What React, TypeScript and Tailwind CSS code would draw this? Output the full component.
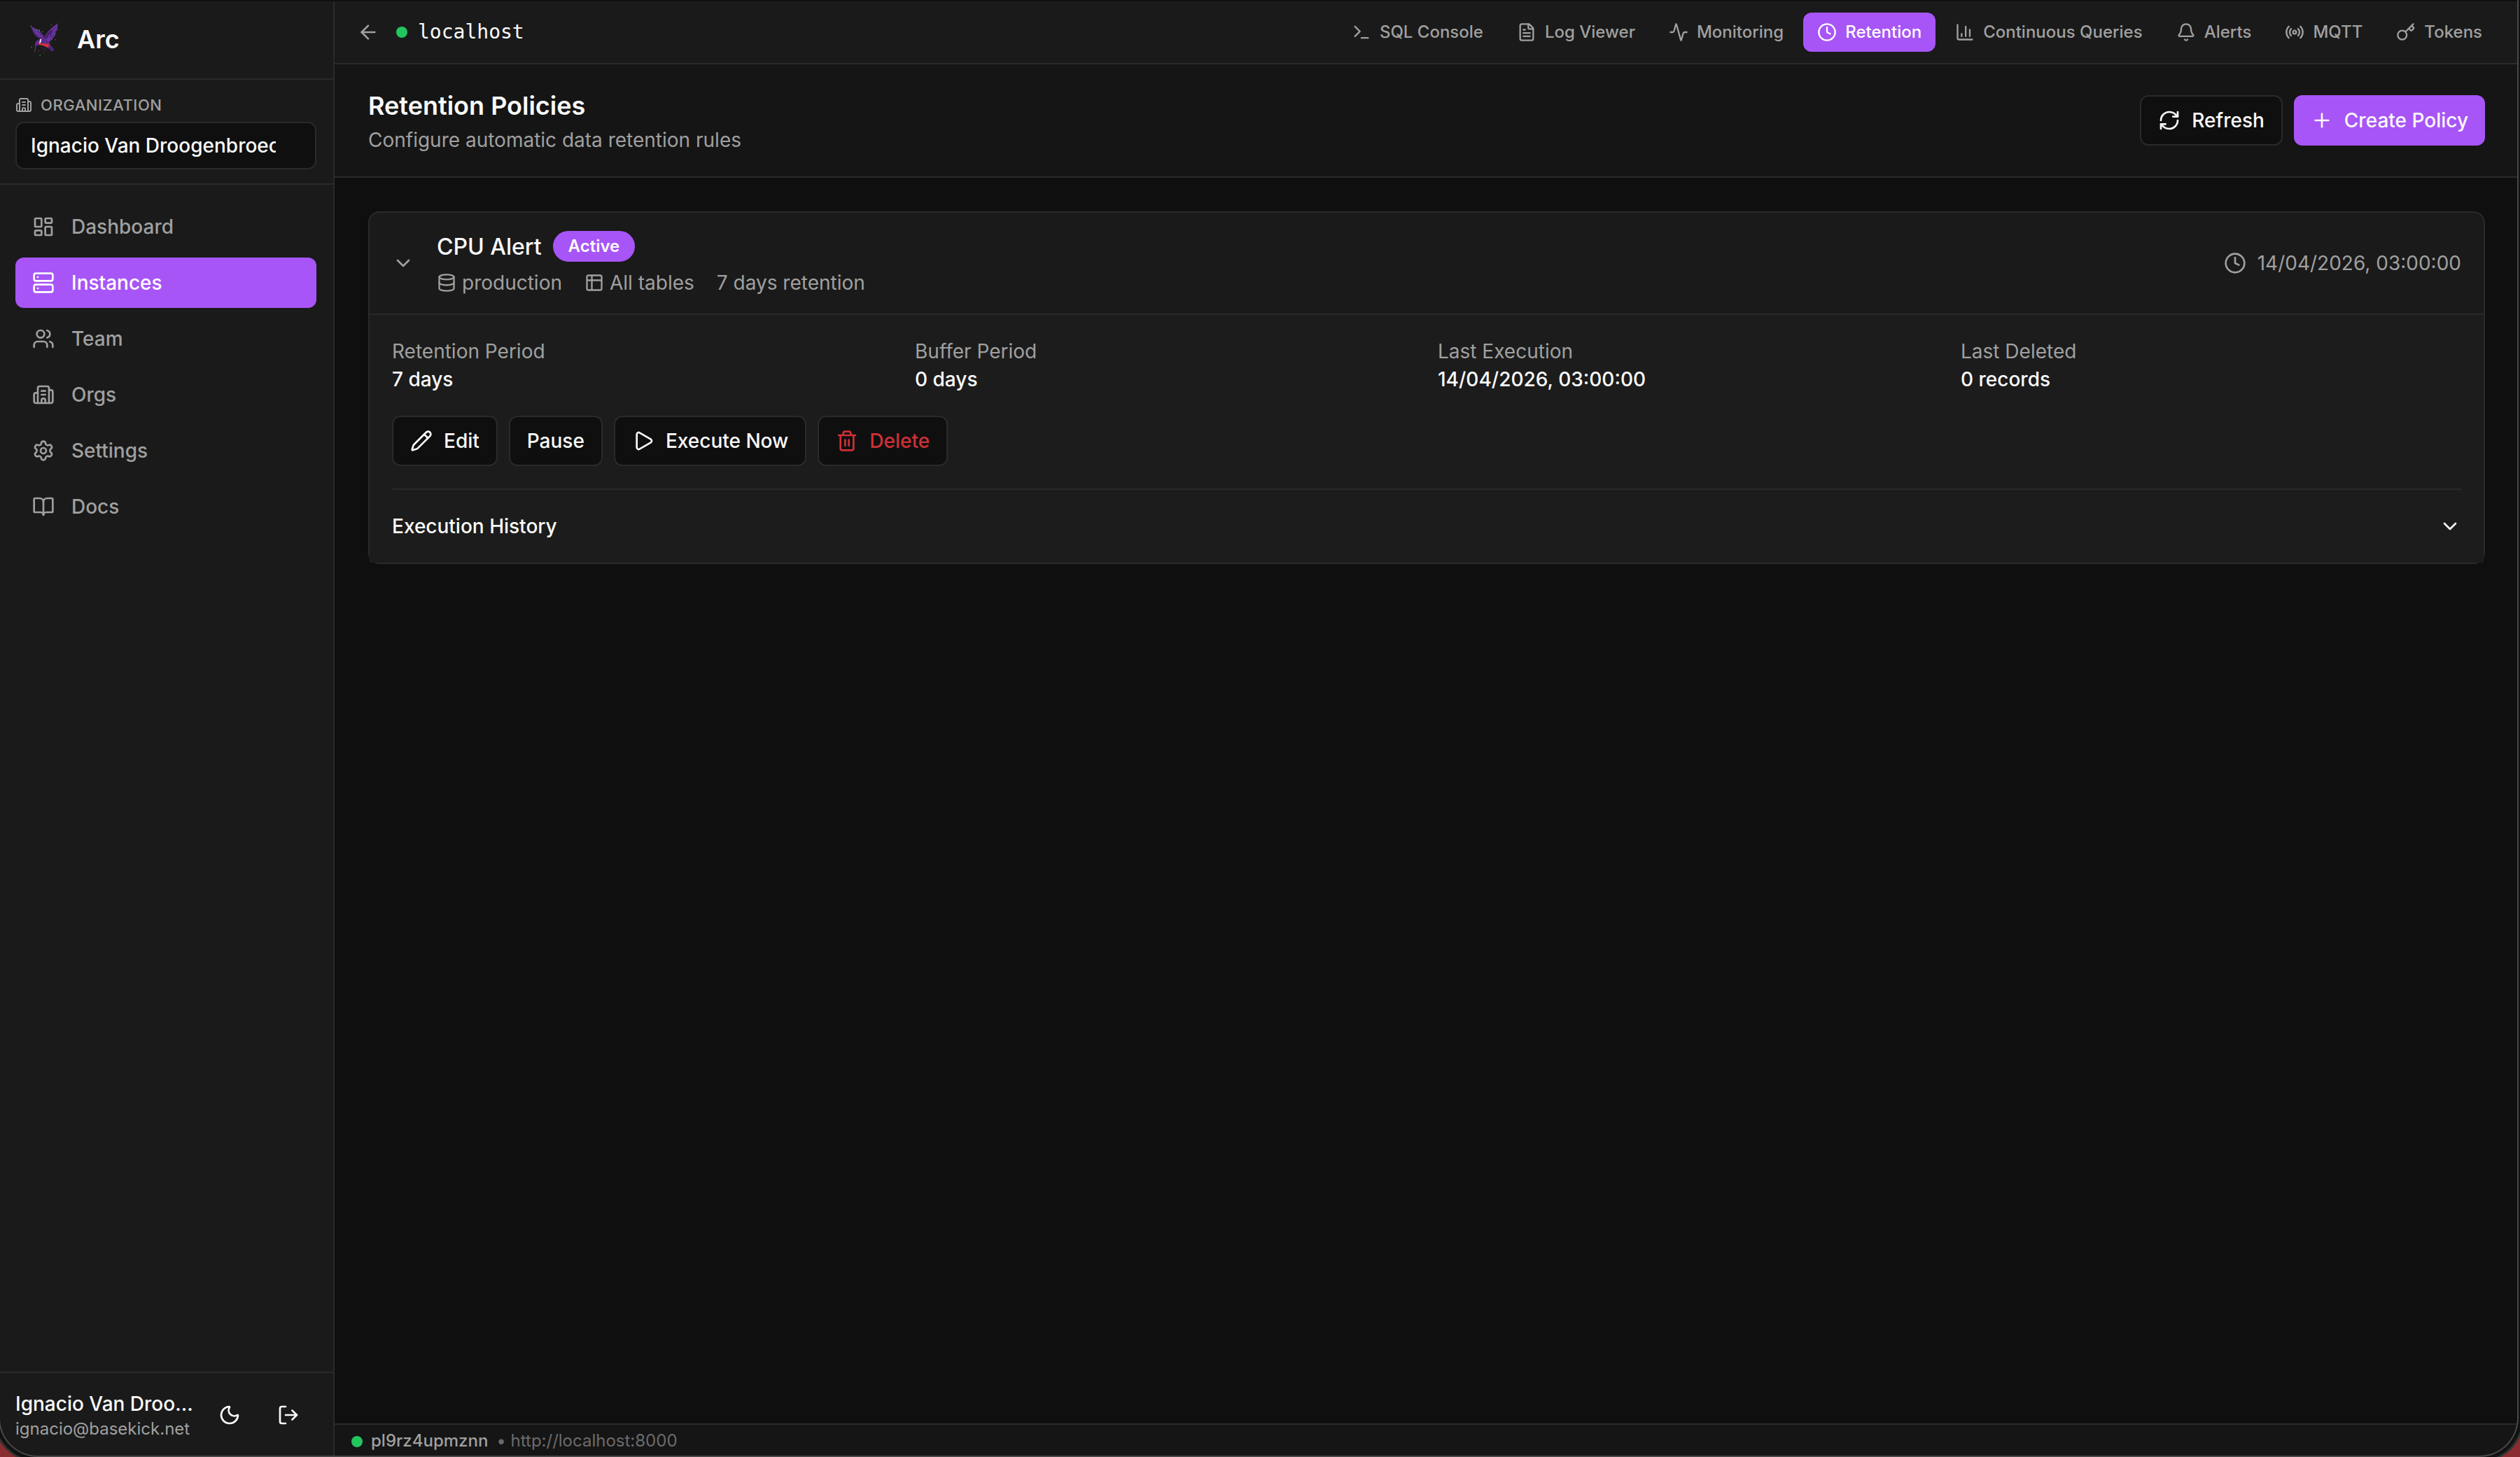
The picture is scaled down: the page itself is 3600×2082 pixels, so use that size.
import React from 'react';
import clsx from 'clsx';
import {
  Activity,
  ArrowLeft,
  Bell,
  BookOpen,
  Building2,
  ChartColumn,
  ChevronDown,
  Clock,
  Database,
  FileText,
  Key,
  LayoutDashboard,
  LogOut,
  Moon,
  Pencil,
  Play,
  Plus,
  Radio,
  RefreshCw,
  Server,
  Settings,
  Table2,
  Terminal,
  Trash2,
  Users,
  type LucideIcon,
} from 'lucide-react';

interface NavItem {
  label: string;
  icon: LucideIcon;
  active?: boolean;
}

const sidebarItems: NavItem[] = [
  { label: 'Dashboard', icon: LayoutDashboard },
  { label: 'Instances', icon: Server, active: true },
  { label: 'Team', icon: Users },
  { label: 'Orgs', icon: Building2 },
  { label: 'Settings', icon: Settings },
  { label: 'Docs', icon: BookOpen },
];

const instanceTabs: NavItem[] = [
  { label: 'SQL Console', icon: Terminal },
  { label: 'Log Viewer', icon: FileText },
  { label: 'Monitoring', icon: Activity },
  { label: 'Retention', icon: Clock, active: true },
  { label: 'Continuous Queries', icon: ChartColumn },
  { label: 'Alerts', icon: Bell },
  { label: 'MQTT', icon: Radio },
  { label: 'Tokens', icon: Key },
];

const policyStats = [
  { label: 'Retention Period', value: '7 days' },
  { label: 'Buffer Period', value: '0 days' },
  { label: 'Last Execution', value: '14/04/2026, 03:00:00' },
  { label: 'Last Deleted', value: '0 records' },
];

function Logo() {
  return (
    <svg viewBox="24 39 144 144" className="mt-0.5 h-12 w-12">
      {/* wings */}
      <path d="M41 51 L62 63 L77 68 L86 80 L98 94 L101 106 L92 108 L76 103 L60 91 L51 76 Z" fill="#5b2b8c" />
      <path d="M52 62 L70 76 L90 97 L82 98 L62 82 Z" fill="#6a35a3" />
      <path d="M158 40 L155 62 L149 80 L145 94 L134 107 L122 119 L105 117 L98 108 L106 88 L119 72 L136 56 Z" fill="#6a35a3" />
      <path d="M132 66 L110 84 L101 107 L112 106 L120 90 L134 80 Z" fill="#482070" />
      <path d="M148 56 L131 79 L124 101 M152 70 L132 101" fill="none" stroke="#3d1c60" strokeWidth="3" />
      {/* body, beak and tail */}
      <path d="M100 106 L78 108 L64 117 L59 130 L60 144 L66 136 L80 132 L104 140 L122 150 L132 161 L142 153 L126 134 L120 118 Z" fill="#5b2b8c" />
      <path d="M110 138 L124 141 L142 153 L133 160 L121 149 Z" fill="#4b2476" />
      <path d="M61 138 L65 140 L59 168 L57 160 Z" fill="#44424a" />
      <path d="M72 122 L92 127 L120 128 L118 143 L108 142 L96 135 L78 133 Z" fill="#d62f35" />
      <path d="M82 108 L88 106 L85 122 L78 126 Z" fill="#f4f2f6" />
      <path d="M92 146 L101 158 M102 145 L107 157" stroke="#43215f" strokeWidth="3" />
      {/* sparks */}
      <g fill="#2fa865">
        <path d="M40 50h5v3h-5z M55 61h3v4h-3z M66 65h3v7h-3z M78 67h3v7h-3z M89 75h3v3h-3z M128 46h4v3h-4z M142 84h4v3h-4z M43 140h4v4h-4z M80 174h4v4h-4z M155 65h3v4h-3z" />
      </g>
      <g fill="#a52c33">
        <path d="M93 75h3v3h-3z M145 108h5v4h-5z M130 108h3v3h-3z M74 156h4v4h-4z M95 165h4v3h-4z M85 143h3v3h-3z M127 122h3v3h-3z" />
      </g>
    </svg>
  );
}

function Sidebar() {
  return (
    <aside className="flex w-[480px] shrink-0 flex-col border-r-2 border-[#2a2a2a] bg-[#1a1a1a]">
      <div className="flex h-28 items-center gap-6 border-b-2 border-[#2a2a2a] px-10 pb-0.5">
        <Logo />
        <span className="text-[36px] leading-[56px] font-semibold">Arc</span>
      </div>

      <div className="border-b-2 border-[#2a2a2a] px-6 py-5">
        <div className="mb-2 flex items-center gap-3 text-[22px] leading-8 font-medium tracking-wide text-[#a0a0a0] uppercase">
          <Building2 className="h-6 w-6" />
          Organization
        </div>
        <div className="flex h-[68px] items-center rounded-xl border-2 border-[#2a2a2a] bg-[#0f0f0f] pr-14 pl-5">
          <span className="overflow-hidden text-[28px] leading-10 font-medium whitespace-nowrap">
            Ignacio Van Droogenbroeck
          </span>
        </div>
      </div>

      <nav className="flex flex-1 flex-col gap-2 p-6">
        {sidebarItems.map(({ label, icon: Icon, active }) => (
          <a
            key={label}
            className={clsx(
              'flex h-[72px] items-center gap-6 rounded-xl px-6 text-[28px] leading-10 font-medium',
              active ? 'bg-[#a855f7] text-white' : 'text-[#a0a0a0]'
            )}
          >
            <Icon className="h-8 w-8" />
            {label}
          </a>
        ))}
      </nav>

      <div className="flex items-center justify-between border-t-2 border-[#2a2a2a] p-6">
        <div className="w-[254px]">
          <p className="truncate text-[28px] leading-10 font-medium">Ignacio Van Droogenbroeck</p>
          <p className="truncate text-[24px] leading-8 text-[#a0a0a0]">ignacio@basekick.net</p>
        </div>
        <div className="flex gap-1">
          <button className="flex h-16 w-20 items-center justify-center">
            <Moon className="h-8 w-8" />
          </button>
          <button className="flex h-16 w-20 items-center justify-center">
            <LogOut className="h-8 w-8" />
          </button>
        </div>
      </div>
    </aside>
  );
}

function TopBar() {
  return (
    <header className="flex h-[90px] items-center justify-between border-b-2 border-[#2a2a2a] bg-[#1a1a1a] px-8">
      <div className="flex items-center">
        <ArrowLeft className="mr-6 h-8 w-8 text-[#a0a0a0]" />
        <span className="mr-[15px] h-4 w-4 rounded-full bg-[#22c55e]" />
        <span className="font-['DejaVu_Sans_Mono',monospace] text-[28px] leading-10">localhost</span>
      </div>
      <nav className="flex gap-2">
        {instanceTabs.map(({ label, icon: Icon, active }) => (
          <a
            key={label}
            className={clsx(
              'flex items-center gap-3 rounded-xl px-5 py-3 text-[24px] leading-8 font-medium whitespace-nowrap',
              active ? 'bg-[#a855f7] text-white' : 'text-[#a0a0a0]'
            )}
          >
            <Icon className="h-7 w-7" />
            {label}
          </a>
        ))}
      </nav>
    </header>
  );
}

interface OutlineButtonProps {
  label: string;
  icon?: LucideIcon;
  danger?: boolean;
}

function OutlineButton({ label, icon: Icon, danger }: OutlineButtonProps) {
  return (
    <button
      className={clsx(
        'flex h-[72px] items-center gap-4 rounded-xl border-2 border-[#2a2a2a] bg-[#0f0f0f] px-6 text-[28px] leading-10 font-medium',
        danger && 'text-[#cf3035]'
      )}
    >
      {Icon && <Icon className="h-8 w-8" />}
      {label}
    </button>
  );
}

function PageHeader() {
  return (
    <div className="flex items-center justify-between border-b-2 border-[#2a2a2a] bg-[#151515] px-12 py-8">
      <div>
        <h1 className="mb-0.5 text-[36px] leading-[54px] font-semibold">Retention Policies</h1>
        <p className="text-[28px] leading-10 text-[#a0a0a0]">Configure automatic data retention rules</p>
      </div>
      <div className="flex gap-4">
        <OutlineButton label="Refresh" icon={RefreshCw} />
        <button className="flex h-[72px] items-center gap-4 rounded-xl bg-[#a855f7] px-6 text-[28px] leading-10 font-medium">
          <Plus className="h-8 w-8" />
          Create Policy
        </button>
      </div>
    </div>
  );
}

function PolicyCard() {
  return (
    <div className="rounded-2xl border-2 border-[#2a2a2a] bg-[#1a1a1a]">
      {/* Summary row */}
      <div className="flex items-center justify-between px-8 py-6">
        <div className="flex items-center gap-8">
          <ChevronDown className="h-8 w-8 text-[#a0a0a0]" />
          <div>
            <div className="flex items-center gap-4">
              <h3 className="pt-0.5 text-[32px] leading-[46px] font-medium">CPU Alert</h3>
              <span className="rounded-full border-2 border-[#a855f7] bg-[#a855f7] px-5 py-1 text-[24px] leading-8 font-semibold">
                Active
              </span>
            </div>
            <div className="mt-2 flex items-center gap-8 text-[28px] leading-10 text-[#a0a0a0]">
              <span className="flex items-center gap-2">
                <Database className="h-7 w-7" />
                production
              </span>
              <span className="flex items-center gap-2">
                <Table2 className="h-7 w-7" />
                All tables
              </span>
              <span>7 days retention</span>
            </div>
          </div>
        </div>
        <div className="flex items-center gap-4 text-[28px] leading-10 text-[#a0a0a0]">
          <Clock className="h-8 w-8" />
          14/04/2026, 03:00:00
        </div>
      </div>

      {/* Expanded details */}
      <div className="border-t-2 border-[#2a2a2a] bg-[#1c1c1c] p-8">
        <div className="mb-8 grid grid-cols-4 gap-8 text-[28px] leading-10">
          {policyStats.map((stat) => (
            <div key={stat.label}>
              <p className="text-[#a0a0a0]">{stat.label}</p>
              <p className="font-medium">{stat.value}</p>
            </div>
          ))}
        </div>

        <div className="flex gap-4">
          <OutlineButton label="Edit" icon={Pencil} />
          <OutlineButton label="Pause" />
          <OutlineButton label="Execute Now" icon={Play} />
          <OutlineButton label="Delete" icon={Trash2} danger />
        </div>

        <div className="mt-8 flex items-center justify-between border-t-2 border-[#2a2a2a] pt-8">
          <h4 className="text-[28px] leading-10 font-medium">Execution History</h4>
          <ChevronDown className="h-8 w-8" />
        </div>
      </div>
    </div>
  );
}

function StatusBar() {
  return (
    <footer className="flex h-12 items-center gap-3 border-t-2 border-[#2a2a2a] bg-[#151515] px-6 text-[24px] leading-8">
      <span className="mt-0.5 h-4 w-4 rounded-full bg-[#22c55e]" />
      <span className="font-medium text-[#a0a0a0]">pl9rz4upmznn</span>
      <span className="text-[#6b6b6b]">• http://localhost:8000</span>
    </footer>
  );
}

export default function App() {
  return (
    <div className="h-[2082px] w-[3600px] overflow-hidden bg-[#8a2c30] font-['Inter',sans-serif] text-[#fafafa]">
      {/* Window frame, its left edge sits just off screen */}
      <div className="relative ml-[-2px] h-full w-[3600px] rounded-b-[56px] shadow-[0_0_0_5px_#121212,0_0_0_8px_#333333]">
        <div className="flex h-full overflow-hidden rounded-b-[56px] bg-[#0f0f0f] pt-0.5">
          <Sidebar />
          <main className="flex min-w-0 flex-1 flex-col">
            <TopBar />
            <PageHeader />
            <div className="flex-1 p-12">
              <PolicyCard />
            </div>
            <StatusBar />
          </main>
        </div>
        <div className="pointer-events-none absolute inset-0 rounded-b-[56px] border-x-2 border-b-2 border-[#484848]" />
      </div>
    </div>
  );
}
